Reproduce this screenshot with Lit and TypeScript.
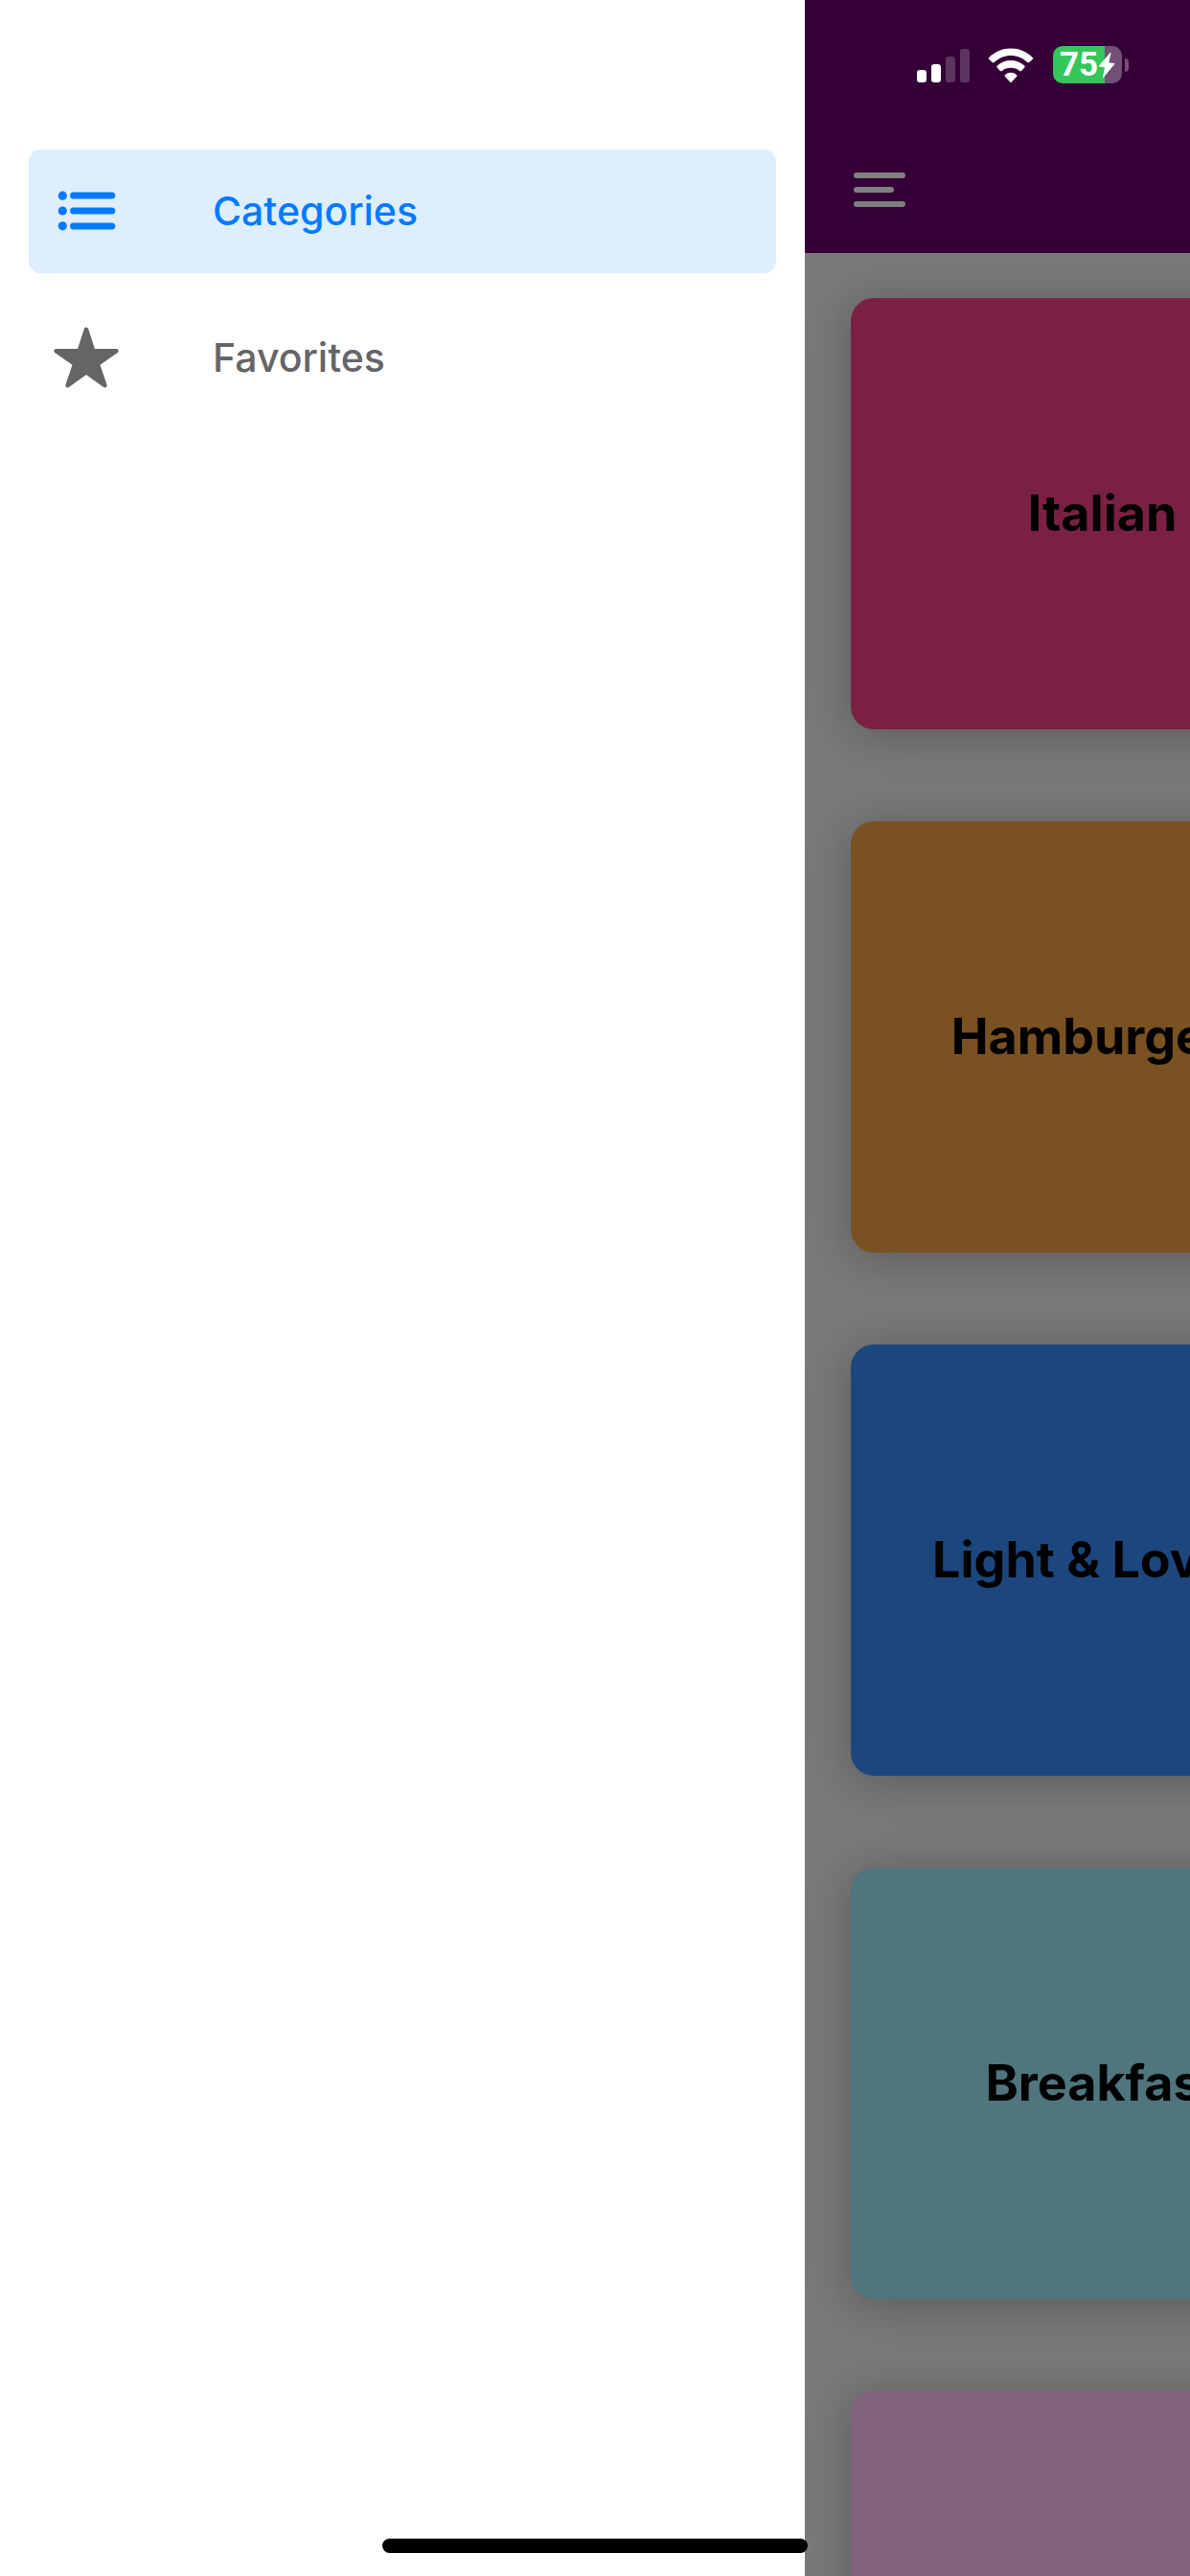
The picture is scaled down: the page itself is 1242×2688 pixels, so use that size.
import { LitElement, html, css, svg } from "lit";
import { customElement, property, state } from "lit/decorators.js";
import { classMap } from "lit/directives/class-map.js";

type Route = "categories" | "favorites";

interface Category {
  title: string;
  color: string;
}

const CATEGORIES: Category[] = [
  { title: "Italian", color: "#7a2143" },
  { title: "Hamburgers", color: "#7a5121" },
  { title: "Light & Lovely", color: "#1c477e" },
  { title: "Breakfast", color: "#4f757e" },
  { title: "", color: "#81637e" },
];

const listIcon = svg`
  <g fill="currentColor">
    <circle cx="11.3" cy="20.2" r="4.6" />
    <circle cx="11.3" cy="36" r="4.6" />
    <circle cx="11.3" cy="51.8" r="4.6" />
  </g>
  <path d="M22.6 20H62.8M22.6 36H62.8M22.6 52H62.8" fill="none"
    stroke="currentColor" stroke-width="7" stroke-linecap="round" />`;

const starIcon = svg`
  <path transform="scale(0.140625)" fill="currentColor"
    d="M394 480a16 16 0 01-9.39-3L256 383.76 127.39 477a16 16 0 01-24.55-18.08L153 310.35 23 221.2a16 16 0 019-29.2h160.38l48.4-148.95a16 16 0 0130.44 0l48.4 149H480a16 16 0 019.05 29.2L359 310.35l50.13 148.53A16 16 0 01394 480z" />`;

/** Signal, Wi-Fi and battery readouts. */
@customElement("status-icons")
class StatusIcons extends LitElement {
  @property({ type: Number }) level = 75;

  static styles = css`
    :host {
      display: flex;
      align-items: center;
      color: #fff;
    }
    svg {
      display: block;
      flex: none;
    }
    .signal {
      width: 56px;
      height: 36px;
      margin-right: 18px;
    }
    .wifi {
      width: 48px;
      height: 36px;
      margin-right: 20px;
    }
    .battery {
      display: flex;
      align-items: center;
      justify-content: center;
      width: 72px;
      height: 39px;
      border-radius: 10px;
      overflow: hidden;
      background: linear-gradient(to right, #34c759 75%, #725075 75%);
      font: 700 35px/39px Roboto, sans-serif;
    }
    .bolt {
      width: 18px;
      height: 28px;
    }
    .nub {
      width: 4px;
      height: 14px;
      margin-left: 3px;
      border-radius: 0 4px 4px 0;
      background: #725075;
    }
  `;

  render() {
    return html`
      <svg class="signal" viewBox="0 0 56 36" fill="currentColor" aria-hidden="true">
        <rect x="0" y="23" width="10" height="13" rx="3" />
        <rect x="15" y="17" width="10" height="19" rx="3" />
        <rect x="30" y="9" width="10" height="27" rx="3" opacity="0.2" />
        <rect x="45" y="1" width="10" height="35" rx="3" opacity="0.2" />
      </svg>
      <svg class="wifi" viewBox="0 0 142 110" fill="currentColor" aria-hidden="true">
        <path d="M1 36Q-1 33 1 31C40-8 102-8 141 31Q143 33 141 36L130 46Q127 49 124 46C94 17 48 17 18 46Q15 49 12 46Z" />
        <path d="M27 62Q25 60 27 57C51 34 91 34 115 57Q117 60 115 62L105 73Q102 75 99 73C84 60 58 60 43 73Q40 75 37 73Z" />
        <path d="M52 91Q50 88 52 86C62 76 80 76 90 86Q92 88 90 91L73 109Q71 111 69 109Z" />
      </svg>
      <div class="battery">
        <span>${this.level}</span>
        <svg class="bolt" viewBox="-2 -2 54 82" fill="currentColor" stroke="currentColor"
          stroke-width="3" stroke-linejoin="round" aria-hidden="true">
          <path d="M37 1L1 42L21 45L14 77L49 35L30 32Z" />
        </svg>
      </div>
      <div class="nub"></div>
    `;
  }
}

@customElement("category-card")
class CategoryCard extends LitElement {
  @property() label = "";
  @property() color = "";

  static styles = css`
    :host {
      display: block;
    }
    .card {
      display: flex;
      align-items: center;
      justify-content: center;
      width: 100%;
      height: 450px;
      padding: 48px;
      border: 0;
      border-radius: 24px;
      box-shadow: 0 6px 48px rgba(0, 0, 0, 0.25);
      color: #000;
      font: 700 52px/66px Inter, "Liberation Sans", sans-serif;
      white-space: nowrap;
      cursor: pointer;
    }
  `;

  render() {
    return html`<button class="card" style="background:${this.color}">${this.label}</button>`;
  }
}

@customElement("app-root")
class AppRoot extends LitElement {
  @state() private route: Route = "categories";

  static styles = css`
    * {
      box-sizing: border-box;
    }
    :host {
      display: block;
      font-family: Inter, "Liberation Sans", sans-serif;
    }
    .shell {
      position: relative;
      display: flex;
      height: 100vh;
      overflow: hidden;
      background: #fff;
    }
    .drawer {
      display: flex;
      flex: none;
      flex-direction: column;
      gap: 24px;
      width: min(840px, 80vw);
      padding: 156px 30px 0;
      background: #fff;
    }
    .item {
      display: flex;
      align-items: center;
      gap: 96px;
      padding: 28px 24px 29px;
      border-radius: 12px;
      color: #656567;
      font-size: 41px;
      font-weight: 500;
      line-height: 72px;
      text-decoration: none;
    }
    .item.active {
      background: #deeeff;
      color: #007aff;
    }
    .icon {
      display: block;
      flex: none;
      width: 72px;
      height: 72px;
    }
    .screen {
      flex: 0 0 100%;
      background: #797979;
    }
    .header {
      display: flex;
      align-items: center;
      height: 264px;
      padding: 132px 42px 0;
      background: #350038;
    }
    .menu {
      padding: 0;
      border: 0;
      background: none;
      color: #807f80;
      cursor: pointer;
    }
    .grid {
      display: grid;
      grid-template-columns: 1fr 1fr;
      gap: 96px;
      padding: 47px 48px;
    }
    .cell {
      grid-column: 1;
    }
    .status {
      position: absolute;
      top: 48px;
      right: 64px;
    }
    .home {
      position: absolute;
      bottom: 24px;
      left: 50%;
      width: 444px;
      height: 15px;
      margin-left: -222px;
      border-radius: 8px;
      background: #000;
    }
  `;

  private link(route: Route, label: string, icon: unknown) {
    const active = this.route === route;
    return html`
      <a
        class=${classMap({ item: true, active })}
        href="#${route}"
        aria-current=${active ? "page" : "false"}
        @click=${() => (this.route = route)}
      >
        <svg class="icon" viewBox="0 0 72 72" aria-hidden="true">${icon}</svg>
        <span>${label}</span>
      </a>
    `;
  }

  render() {
    return html`
      <div class="shell">
        <nav class="drawer">
          ${this.link("categories", "Categories", listIcon)}
          ${this.link("favorites", "Favorites", starIcon)}
        </nav>
        <main class="screen">
          <header class="header">
            <button class="menu" aria-label="Menu">
              <svg class="icon" viewBox="0 0 72 72" aria-hidden="true">
                <path d="M12 21H60M12 36H48M12 51H60" fill="none" stroke="currentColor"
                  stroke-width="6" stroke-linecap="round" />
              </svg>
            </button>
          </header>
          <div class="grid">
            ${CATEGORIES.map(
              (c) => html`<category-card class="cell" .label=${c.title} .color=${c.color}></category-card>`
            )}
          </div>
        </main>
        <status-icons class="status" .level=${75}></status-icons>
        <div class="home"></div>
      </div>
    `;
  }
}
